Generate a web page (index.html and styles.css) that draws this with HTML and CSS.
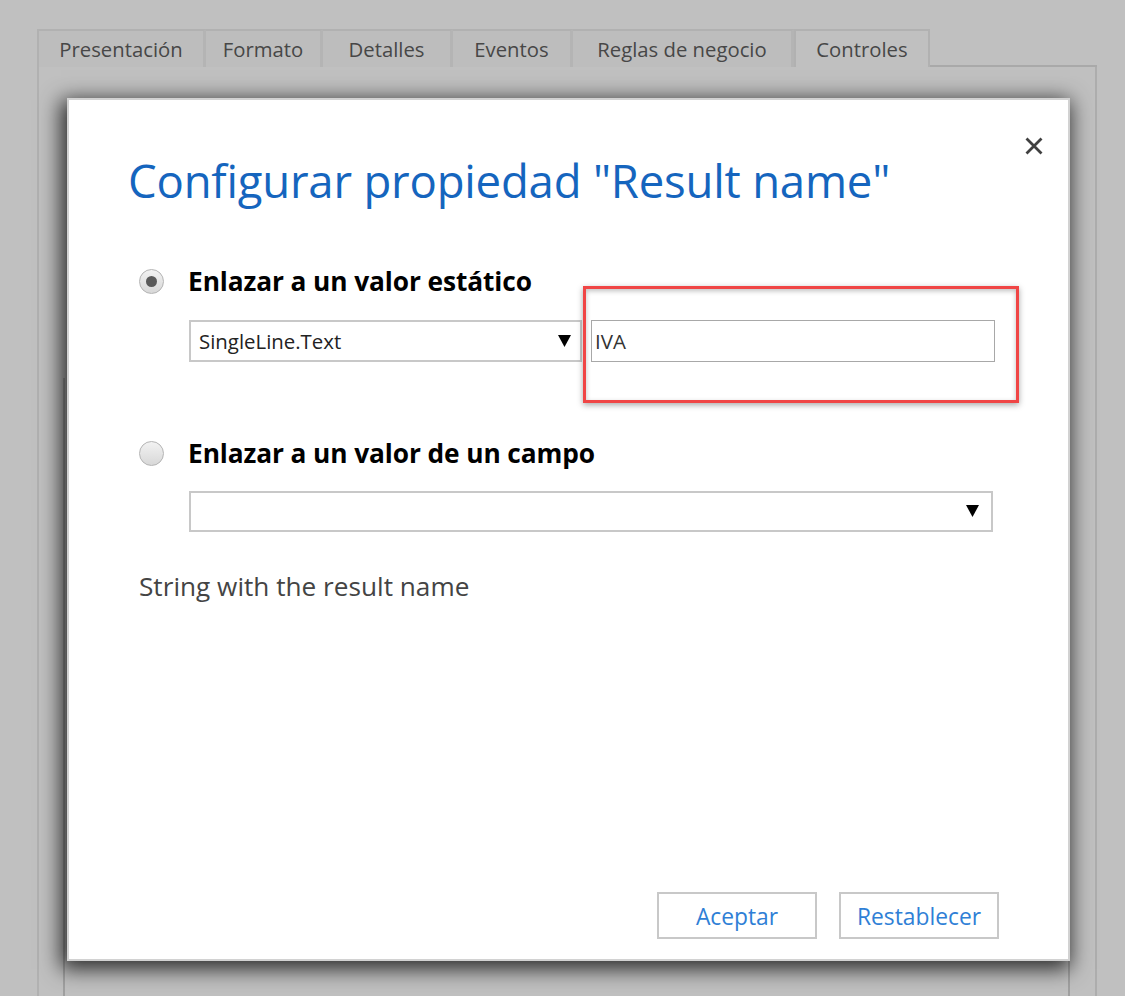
FILE: index.html
```html
<!DOCTYPE html>
<html lang="es">
<head>
<meta charset="utf-8">
<title>Configurar propiedad</title>
<link rel="stylesheet" href="styles.css">
</head>
<body>
<div class="page">
  <div class="panel">
    <div class="tabbar">
      <div class="tab">Presentación</div>
      <div class="tab t-formato">Formato</div>
      <div class="tab t-detalles">Detalles</div>
      <div class="tab t-eventos">Eventos</div>
      <div class="tab t-reglas">Reglas de negocio</div>
      <div class="tab active">Controles</div>
      <div class="tab-fill"></div>
    </div>
    <div class="panel-body">
      <div class="inner"></div>
    </div>
  </div>

  <div class="modal">
    <div class="modal-head">
      <h1 class="title">Configurar propiedad "Result name"</h1>
      <button class="close" aria-label="Cerrar">
        <svg width="20" height="20" viewBox="0 0 20 20"><path d="M2.5 2.5 L17.5 17.5 M17.5 2.5 L2.5 17.5" stroke="#404040" stroke-width="2.8" stroke-linecap="butt"/></svg>
      </button>
    </div>

    <div class="option">
      <span class="radio checked"><span class="dot"></span></span>
      <span class="opt-label">Enlazar a un valor estático</span>
    </div>
    <div class="fields">
      <div class="select s-type"><span>SingleLine.Text</span><svg class="arrow" width="13" height="13" viewBox="0 0 13 13"><path d="M0 1 H13 L6.5 13 Z" fill="#000"/></svg></div>
      <div class="input">IVA</div>
    </div>

    <div class="option opt2">
      <span class="radio"></span>
      <span class="opt-label">Enlazar a un valor de un campo</span>
    </div>
    <div class="fields">
      <div class="select s-field"><span></span><svg class="arrow" width="13" height="13" viewBox="0 0 13 13"><path d="M0 1 H13 L6.5 13 Z" fill="#000"/></svg></div>
    </div>

    <p class="desc">String with the result name</p>

    <div class="actions">
      <button class="btn">Aceptar</button>
      <button class="btn">Restablecer</button>
    </div>

    <div class="highlight"></div>
  </div>
</div>
</body>
</html>
```

FILE: styles.css
```css
html, body {
  margin: 0;
  padding: 0;
}
body {
  background: #c0c0c0;
  font-family: "Open Sans", "Noto Sans", "Liberation Sans", sans-serif;
  width: 1125px;
  height: 996px;
  overflow: hidden;
}
.page {
  position: relative;
  width: 1125px;
  height: 996px;
}
.panel {
  margin-left: 37px;
  padding-top: 29px;
  width: 1060px;
  height: 967px;
  display: flex;
  flex-direction: column;
}
.tabbar {
  display: flex;
  height: 38px;
  flex-shrink: 0;
}
.tab {
  box-sizing: border-box;
  height: 38px;
  background: #bdbdbd;
  border-top: 2px solid #b1b1b1;
  border-right: 3px solid #b4b4b4;
  color: #474747;
  font-size: 20.3px;
  display: flex;
  align-items: center;
  justify-content: center;
  padding-top: 0;
  width: 169px;
  white-space: nowrap;
}
.tab:first-child {
  border-left: 2px solid #b1b1b1;
}
.t-formato { width: 117px; }
.t-detalles { width: 130px; }
.t-eventos { width: 120px; }
.t-reglas { width: 221px; }
.tab.active {
  background: #c0c0c0;
  border: 2px solid #b1b1b1;
  border-bottom: none;
  width: 136px;
}
.tab-fill {
  flex: 1;
  border-bottom: 2px solid #a9a9a9;
  box-sizing: border-box;
}
.panel-body {
  flex: 1;
  border-left: 2px solid #b1b1b1;
  border-right: 2px solid #adadad;
  display: flex;
  flex-direction: column;
}
.inner {
  margin-top: 311px;
  margin-left: 24px;
  width: 1007px;
  flex: 1;
  box-sizing: border-box;
  border-left: 2px solid #a0a0a0;
  border-right: 2px solid #a0a0a0;
}

/* modal dialog overlay */
.modal {
  position: absolute;
  left: 67px;
  top: 98px;
  width: 1003px;
  height: 863px;
  box-sizing: border-box;
  background: #fff;
  border: 2px solid #d2d2d2;
  box-shadow: -3px 5px 20px 3px rgba(0, 0, 0, 0.78);
  padding: 50px 69px 20px 70px;
  display: flex;
  flex-direction: column;
}
.modal-head {
  display: flex;
  align-items: flex-start;
  justify-content: space-between;
}
.title {
  margin: 0 0 0 -11px;
  font-weight: 400;
  font-size: 45.5px;
  line-height: 60px;
  color: #1565be;
  letter-spacing: -0.2px;
  white-space: nowrap;
}
.close {
  margin: -14px -45px 0 0;
  padding: 0;
  border: none;
  background: none;
  width: 20px;
  height: 20px;
  display: flex;
}

.option {
  display: flex;
  align-items: center;
  height: 40px;
  margin-top: 51px;
}
.opt2 { margin-top: 71px; }
.radio {
  box-sizing: border-box;
  width: 25px;
  height: 25px;
  border-radius: 50%;
  border: 1px solid #b4b4b4;
  background: linear-gradient(#f2f2f2, #d8d8d8);
  display: flex;
  align-items: center;
  justify-content: center;
  margin-right: 24px;
  flex-shrink: 0;
}
.dot {
  width: 11px;
  height: 11px;
  border-radius: 50%;
  background: #5a5a5a;
}
.opt-label {
  font-weight: 700;
  font-size: 26.3px;
  color: #000;
  letter-spacing: -0.1px;
  white-space: nowrap;
}
.fields {
  display: flex;
  gap: 9px;
  margin-top: 19px;
  margin-left: 50px;
}
.select {
  box-sizing: border-box;
  height: 42px;
  border: 2px solid #c8c8c8;
  display: flex;
  align-items: center;
  justify-content: space-between;
  padding: 0 9px 0 8px;
  font-size: 20.4px;
  color: #222;
}
.s-type { width: 393px; }
.s-field { width: 804px; height: 41px; padding-right: 12px; }
.arrow {
  display: block;
  margin-top: -2px;
}
.input {
  box-sizing: border-box;
  width: 404px;
  height: 42px;
  border: 1px solid #a8a8a8;
  display: flex;
  align-items: center;
  padding-left: 3px;
  font-size: 20.5px;
  color: #333;
}
.opt2 + .fields { margin-top: 18px; }
.desc {
  margin: 37px 0 0 0;
  font-size: 26.2px;
  line-height: 34px;
  color: #444;
  white-space: nowrap;
}
.actions {
  margin-top: auto;
  display: flex;
  justify-content: flex-end;
  gap: 22px;
}
.btn {
  box-sizing: border-box;
  width: 160px;
  height: 47px;
  border: 2px solid #c8c8c8;
  background: #fff;
  color: #2f7fd6;
  font-family: inherit;
  font-size: 22.8px;
  padding: 2px 0 0 0;
}

/* red callout overlay */
.highlight {
  position: absolute;
  left: 514px;
  top: 186px;
  width: 436px;
  height: 117px;
  box-sizing: border-box;
  border: 3px solid #f04545;
  box-shadow: 0 2px 6px rgba(0, 0, 0, 0.35), inset 0 2px 5px rgba(0, 0, 0, 0.25);
}
```
